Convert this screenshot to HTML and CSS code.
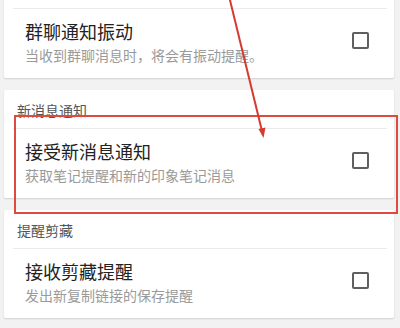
FILE: index.html
```html
<!DOCTYPE html>
<html lang="zh">
<head>
<meta charset="utf-8">
<link rel="stylesheet" href="styles.css">
</head>
<body>
<div class="page">
  <div class="card first">
    <div class="stub"></div>
    <div class="item">
      <div class="texts">
        <div class="title">群聊通知振动</div>
        <div class="sub">当收到群聊消息时，将会有振动提醒。</div>
      </div>
      <div class="check"></div>
    </div>
  </div>

  <div class="card">
    <div class="header">新消息通知</div>
    <div class="item">
      <div class="texts">
        <div class="title">接受新消息通知</div>
        <div class="sub">获取笔记提醒和新的印象笔记消息</div>
      </div>
      <div class="check"></div>
    </div>
  </div>

  <div class="card">
    <div class="header">提醒剪藏</div>
    <div class="item">
      <div class="texts">
        <div class="title">接收剪藏提醒</div>
        <div class="sub">发出新复制链接的保存提醒</div>
      </div>
      <div class="check"></div>
    </div>
  </div>

  <div class="highlight"></div>
  <svg class="arrow" width="400" height="328" viewBox="0 0 400 328">
    <line x1="228" y1="-8" x2="262" y2="131" stroke="#d63a2f" stroke-width="2"/>
    <polygon points="263.5,138 258.5,129 265.5,127.5" fill="#d63a2f"/>
  </svg>
</div>
</body>
</html>
```
FILE: styles.css
```css
html, body {
  margin: 0;
  padding: 0;
  background: #f2f2f2;
}
body {
  font-family: "Noto Sans CJK SC", "Noto Sans", sans-serif;
  width: 400px;
  height: 328px;
  overflow: hidden;
}
.page {
  position: relative;
  width: 400px;
  height: 328px;
  display: flex;
  flex-direction: column;
  gap: 12px;
}
.card {
  background: #fff;
  margin: 0 6px 0 4px;
  border-radius: 2px;
  box-shadow: 0 1px 2px rgba(0, 0, 0, 0.14);
}
.card.first {
  margin-top: -12px;
}
.stub {
  height: 20px;
}
.header {
  height: 38px;
  box-sizing: border-box;
  padding: 10px 0 0 13px;
  font-size: 14px;
  line-height: 20px;
  color: #555;
}
.item {
  margin: 0 7px 0 9px;
  border-top: 1px solid #ebebeb;
  height: 70px;
  box-sizing: border-box;
  padding: 10px 18px 0 12px;
  display: flex;
  align-items: flex-start;
  justify-content: space-between;
}
.texts {
  display: flex;
  flex-direction: column;
  gap: 2px;
}
.title {
  font-size: 18px;
  line-height: 24px;
  color: #222;
}
.sub {
  font-size: 14px;
  line-height: 20px;
  color: #9a9a9a;
}
.check {
  width: 17px;
  height: 17px;
  box-sizing: border-box;
  border: 2px solid #5f5f5f;
  border-radius: 2px;
  margin-top: 13px;
}
.highlight {
  position: absolute;
  left: 14px;
  top: 115px;
  width: 384px;
  height: 99px;
  box-sizing: border-box;
  border: 2px solid #dc4a40;
}
.arrow {
  position: absolute;
  left: 0;
  top: 0;
  pointer-events: none;
}
```
